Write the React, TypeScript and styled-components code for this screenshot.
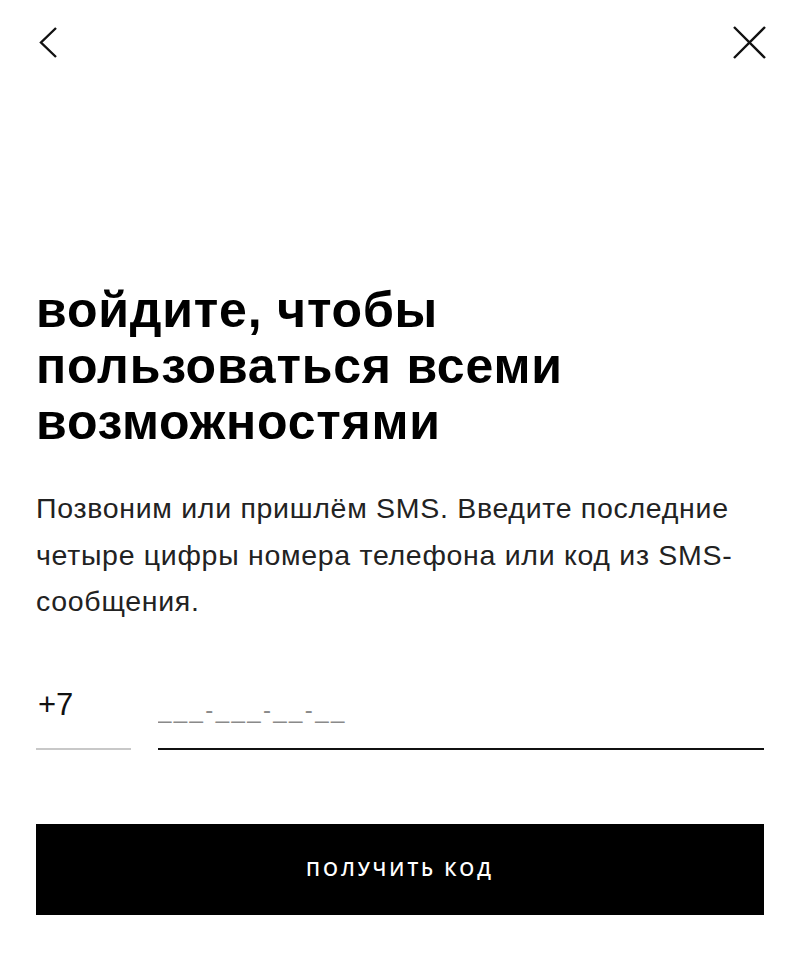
import styled, { createGlobalStyle } from "styled-components";

const GlobalStyle = createGlobalStyle`
  html, body {
    margin: 0;
    padding: 0;
    background: #fff;
  }
  body {
    font-family: "Liberation Sans", Arial, sans-serif;
    color: #000;
  }
`;

const Screen = styled.main`
  width: 800px;
  height: 956px;
  box-sizing: border-box;
  padding: 0 36px;
  display: flex;
  flex-direction: column;
`;

const TopBar = styled.div`
  display: flex;
  justify-content: space-between;
  align-items: center;
  height: 86px;
  margin: 0 -6px 0 0;
`;

const IconButton = styled.button`
  width: 40px;
  height: 40px;
  border: none;
  background: none;
  padding: 0;
  display: flex;
  align-items: center;
  justify-content: center;
  cursor: pointer;
`;

const Body = styled.section`
  margin-top: 196px;
`;

const Title = styled.h1`
  margin: 0;
  font-size: 50px;
  line-height: 56px;
  font-weight: 700;
  letter-spacing: 0.8px;
`;

const Lead = styled.p`
  margin: 35px 0 0;
  font-size: 28.5px;
  line-height: 46.5px;
  color: #222;
  letter-spacing: 0.7px;
`;

const PhoneRow = styled.div`
  display: flex;
  gap: 27px;
  margin-top: 49px;
`;

const Field = styled.label<{ $w?: number; $active?: boolean }>`
  display: block;
  ${p => (p.$w ? `width: ${p.$w}px;` : "flex: 1;")}
  border-bottom: ${p => (p.$active ? "2px solid #111" : "2px solid #c8c8c8")};
  height: 76px;
  box-sizing: border-box;
  position: relative;
`;

const Prefix = styled.span`
  position: absolute;
  left: 2px;
  top: 13px;
  font-size: 31px;
  color: #111;
`;

const Input = styled.input`
  border: none;
  outline: none;
  background: none;
  width: 100%;
  font-family: inherit;
  font-size: 24px;
  padding: 0;
  margin-top: 22px;
  color: #111;
  letter-spacing: 2.4px;
  &::placeholder {
    color: #8a8a8a;
  }
`;

const Submit = styled.button`
  margin-top: 74px;
  height: 91px;
  width: 100%;
  border: none;
  background: #000;
  color: #fff;
  font-family: "Open Sans", "Liberation Sans", sans-serif;
  font-size: 19px;
  font-weight: 600;
  letter-spacing: 3px;
  cursor: pointer;
`;

export default function App() {
  return (
    <>
      <GlobalStyle />
      <Screen>
        <TopBar>
          <IconButton aria-label="Назад">
            <svg width="40" height="40" viewBox="0 0 40 40">
              <path d="M20 5 L5 19.5 L20 34" fill="none" stroke="#111" strokeWidth="2.4" />
            </svg>
          </IconButton>
          <IconButton aria-label="Закрыть">
            <svg width="40" height="40" viewBox="0 0 40 40">
              <path d="M4 4 L35 35 M35 4 L4 35" fill="none" stroke="#111" strokeWidth="2.4" />
            </svg>
          </IconButton>
        </TopBar>
        <Body>
          <Title>
            войдите, чтобы
            <br />
            пользоваться всеми
            <br />
            возможностями
          </Title>
          <Lead>
            Позвоним или пришлём SMS. Введите последние четыре цифры номера телефона или код из SMS-сообщения.
          </Lead>
          <PhoneRow>
            <Field $w={95}>
              <Prefix>+7</Prefix>
            </Field>
            <Field $active>
              <Input placeholder="___-___-__-__" />
            </Field>
          </PhoneRow>
          <Submit>ПОЛУЧИТЬ КОД</Submit>
        </Body>
      </Screen>
    </>
  );
}
